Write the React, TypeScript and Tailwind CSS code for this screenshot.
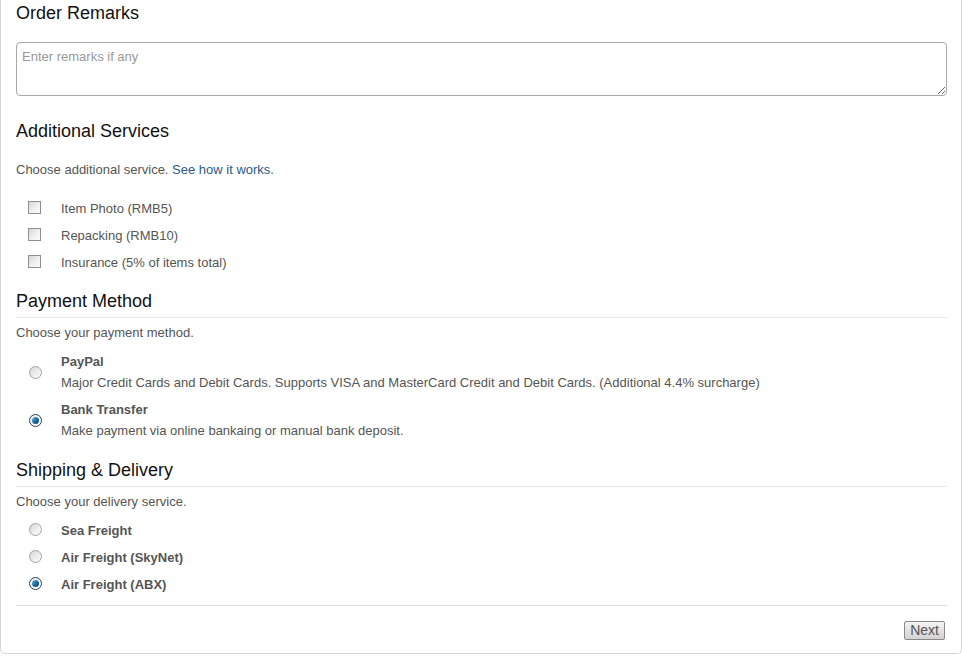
import { useState } from "react";

const services = ["Item Photo (RMB5)", "Repacking (RMB10)", "Insurance (5% of items total)"];

const payments = [
  {
    id: "paypal",
    title: "PayPal",
    desc: "Major Credit Cards and Debit Cards. Supports VISA and MasterCard Credit and Debit Cards. (Additional 4.4% surcharge)",
  },
  {
    id: "bank",
    title: "Bank Transfer",
    desc: "Make payment via online bankaing or manual bank deposit.",
  },
];

const deliveries = ["Sea Freight", "Air Freight (SkyNet)", "Air Freight (ABX)"];

function Checkbox({ checked, onClick }: { checked: boolean; onClick: () => void }) {
  return (
    <span
      onClick={onClick}
      className="w-[13px] h-[13px] shrink-0 border border-[#8e8f8f] bg-gradient-to-br from-[#d6d6d6] via-[#eeeeee] to-[#fcfcfc] flex items-center justify-center cursor-pointer"
    >
      {checked && <span className="w-[7px] h-[7px] bg-[#333]" />}
    </span>
  );
}

function Radio({ checked, onClick }: { checked: boolean; onClick: () => void }) {
  return (
    <span
      onClick={onClick}
      className={
        checked
          ? "w-[13px] h-[13px] shrink-0 rounded-full border border-[#2c3e50] bg-gradient-to-br from-[#e8eef4] to-[#ffffff] flex items-center justify-center cursor-pointer"
          : "block w-[13px] h-[13px] shrink-0 rounded-full border border-[#a2a2a2] bg-gradient-to-br from-[#d4d4d4] via-[#ececec] to-[#fdfdfd] cursor-pointer"
      }
    >
      {checked && (
        <span className="w-[7px] h-[7px] rounded-full bg-gradient-to-br from-[#6fb3e0] via-[#1f6fa8] to-[#0d3f66]" />
      )}
    </span>
  );
}

export default function App() {
  const [picked, setPicked] = useState<boolean[]>([false, false, false]);
  const [payment, setPayment] = useState("bank");
  const [delivery, setDelivery] = useState(2);

  return (
    <div className="w-[962px] h-[656px] bg-white font-['Liberation_Sans',Arial,sans-serif] text-[#555]">
      <div className="border-x border-b border-[#d6d6d6] rounded-b-[5px] pl-[15px] pr-[14px] pt-[3px] pb-[13px]">
        <h2 className="text-[18px] leading-[20px] text-[#111]">Order Remarks</h2>
        <textarea
          placeholder="Enter remarks if any"
          className="mt-[19px] block w-full h-[54px] border border-[#a9a9a9] rounded-[4px] px-[5px] py-[6px] text-[13px] leading-[16px] text-[#333] placeholder:text-[#999] outline-none"
        />

        <h2 className="mt-[25px] text-[18px] leading-[20px] text-[#111]">Additional Services</h2>
        <p className="mt-[20px] text-[13px] leading-[18px]">
          Choose additional service. <span className="text-[#2a5a8c]">See how it works.</span>
        </p>
        <div className="mt-[16px] flex flex-col pl-[12px]">
          {services.map((s, i) => (
            <div key={s} className="h-[27px] flex items-center gap-[20px]">
              <span className="-mt-[2px]">
                <Checkbox
                  checked={picked[i]}
                  onClick={() => setPicked(picked.map((p, j) => (j === i ? !p : p)))}
                />
              </span>
              <span className="text-[13px] leading-[18px]">{s}</span>
            </div>
          ))}
        </div>

        <h2 className="mt-[15px] text-[18px] leading-[20px] text-[#111] pb-[6px] border-b border-[#e5e5e5]">
          Payment Method
        </h2>
        <p className="mt-[6px] text-[13px] leading-[18px]">Choose your payment method.</p>
        <div className="mt-[11px] flex flex-col gap-[9px] pl-[13px]">
          {payments.map((p) => (
            <div key={p.id} className="flex items-center gap-[19px]">
              <span className="-mt-[1px]">
                <Radio checked={payment === p.id} onClick={() => setPayment(p.id)} />
              </span>
              <div>
                <div className="text-[13px] leading-[18px] font-bold">{p.title}</div>
                <div className="mt-[3px] text-[13px] leading-[18px]">{p.desc}</div>
              </div>
            </div>
          ))}
        </div>

        <h2 className="mt-[20px] text-[18px] leading-[20px] text-[#111] pb-[6px] border-b border-[#e5e5e5]">
          Shipping &amp; Delivery
        </h2>
        <p className="mt-[6px] text-[13px] leading-[18px]">Choose your delivery service.</p>
        <div className="mt-[6px] flex flex-col pl-[13px]">
          {deliveries.map((d, i) => (
            <div key={d} className="h-[27px] flex items-center gap-[19px]">
              <span className="-mt-[2px]">
                <Radio checked={delivery === i} onClick={() => setDelivery(i)} />
              </span>
              <span className="text-[13px] leading-[18px] font-bold">{d}</span>
            </div>
          ))}
        </div>

        <div className="mt-[7px] border-t border-[#dcdcdc]" />
        <div className="mt-[15px] flex justify-end pr-[2px]">
          <button className="h-[19px] px-[5px] border border-[#8a8a8a] rounded-[2px] bg-gradient-to-b from-[#f4f4f4] to-[#d2d2d2] text-[14px] leading-[15px] text-[#555]">
            Next
          </button>
        </div>
      </div>
    </div>
  );
}
